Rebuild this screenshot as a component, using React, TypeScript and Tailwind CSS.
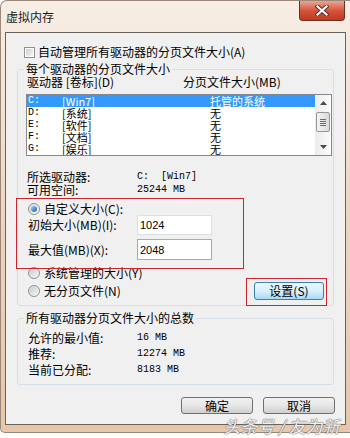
import React from "react";

const CJK = "font-['Noto_Sans_CJK_SC','Liberation_Sans',sans-serif]";
const MONO = "font-['Liberation_Mono','Noto_Sans_CJK_SC',monospace]";

const DRIVES = [
  { d: "C:", label: "[Win7]", size: "托管的系统", selected: true },
  { d: "D:", label: "[系统]", size: "无" },
  { d: "E:", label: "[软件]", size: "无" },
  { d: "F:", label: "[文档]", size: "无" },
  { d: "G:", label: "[娱乐]", size: "无" },
];

const TOTALS = [
  { k: "允许的最小值:", v: "16 MB" },
  { k: "推荐:", v: "12274 MB" },
  { k: "当前已分配:", v: "8183 MB" },
];

function Radio({ checked }: { checked?: boolean }) {
  return (
    <span className="flex h-[12px] w-[12px] shrink-0 items-center justify-center rounded-full border border-[#8e8f8f] bg-gradient-to-br from-[#d6d8dc] to-[#fbfbfb]">
      {checked ? (
        <span className="h-[6px] w-[6px] rounded-full bg-gradient-to-br from-[#9fd0f5] to-[#1a5ea9]" />
      ) : (
        <span className="h-[8px] w-[8px] rounded-full bg-gradient-to-br from-[#c9cccf] to-[#f4f4f4]" />
      )}
    </span>
  );
}

function Arrow({ up }: { up?: boolean }) {
  return (
    <svg width="7" height="4" viewBox="0 0 7 4">
      <path d={up ? "M0 4 L3.5 0 L7 4 Z" : "M0 0 L3.5 4 L7 0 Z"} fill="#4a4a4a" />
    </svg>
  );
}

function Button({ children, focused }: { children: React.ReactNode; focused?: boolean }) {
  return (
    <div
      className={
        focused
          ? "flex h-[18px] w-[70px] items-center justify-center rounded-[3px] border border-[#3c7fb1] bg-gradient-to-b from-[#eaf6fd] via-[#d9f0fc] to-[#a7d9f5]"
          : "flex h-[17px] w-[72px] items-center justify-center rounded-[3px] border border-[#707070] bg-gradient-to-b from-[#f2f2f2] via-[#e6e6e6] to-[#cfcfcf]"
      }
    >
      {children}
    </div>
  );
}

export default function App() {
  return (
    <div className={`relative h-[438px] w-[350px] overflow-hidden bg-white text-[12px] leading-[12px] text-black ${CJK}`}>
      <div className="h-[433px] rounded-tl-[7px] rounded-bl-[5px] border-y border-l border-[#9c8878] bg-gradient-to-b from-[#f7eee5] via-[#ecd6c1] to-[#e6c7a9]">
        {/* Title bar */}
        <div className="flex h-[31px] items-center">
          <span className="pl-[5px] text-[12px] text-[#1a1a1a]">虚拟内存</span>
          <div className="mr-[5px] ml-auto flex h-[20px] w-[46px] items-center justify-center self-start rounded-b-[4px] border border-t-0 border-[#6d2e23] bg-gradient-to-b from-[#e7a597] via-[#d4543d] to-[#c0391f]">
            <svg width="14" height="11" viewBox="0 0 14 11">
              <path d="M2.5 1.5 L11.5 9.5 M11.5 1.5 L2.5 9.5" stroke="#5a2a22" strokeWidth="4" strokeLinecap="square" />
              <path d="M2.5 1.5 L11.5 9.5 M11.5 1.5 L2.5 9.5" stroke="#ffffff" strokeWidth="2.2" strokeLinecap="square" />
            </svg>
          </div>
        </div>

        {/* Client area */}
        <div className="relative ml-[4px] flex h-[393px] w-[341px] flex-col border border-[#6d6259] bg-[#f0f0f0]">
          <div className="mt-[12px] flex h-[14px] items-center pl-[18px]">
            <span className="h-[11px] w-[11px] border border-[#8e8f8f] bg-white p-[1px]">
              <span className="block h-full w-full bg-gradient-to-br from-[#cdd0d4] to-[#f4f4f4]" />
            </span>
            <span className="ml-[3px]">自动管理所有驱动器的分页文件大小(A)</span>
          </div>

          {/* Per-drive group */}
          <fieldset className="mt-[4px] ml-[11px] w-[317px] rounded-[3px] border border-[#d5dfe5]">
            <legend className="ml-[6px] px-[2px] leading-[12px]">每个驱动器的分页文件大小</legend>
            <div className="flex flex-col pb-[5px] pl-[8px]">
              <div className="mt-[1px] flex h-[12px] items-center pl-[1px]">
                <span className="w-[156px]">驱动器 [卷标](D)</span>
                <span>分页文件大小(MB)</span>
              </div>

              <div className="mt-[6px] flex h-[62px] w-[306px] border border-[#828790] bg-white">
                <div className="flex flex-1 flex-col overflow-hidden">
                  {DRIVES.map((r) => (
                    <div
                      key={r.d}
                      className={`grid h-[12px] shrink-0 grid-cols-[35px_148px_1fr] items-center text-[11px] leading-[12px] ${r.selected ? "bg-[#3399ff] text-white" : ""}`}
                    >
                      <span className={`${MONO} pl-[1px] text-[10px]`}>{r.d}</span>
                      <span>{r.label}</span>
                      <span>{r.size}</span>
                    </div>
                  ))}
                </div>
                <div className="flex w-[16px] flex-col items-center bg-gradient-to-r from-[#ececec] to-[#fbfbfb]">
                  <div className="flex h-[16px] items-center justify-center">
                    <Arrow up />
                  </div>
                  <div className="mt-[1px] flex h-[20px] w-[14px] flex-col items-center justify-center gap-[1px] rounded-[2px] border border-[#979797] bg-gradient-to-r from-[#f4f4f4] to-[#d9d9d9]">
                    <span className="h-px w-[6px] bg-[#6b6b6b]" />
                    <span className="h-px w-[6px] bg-[#6b6b6b]" />
                    <span className="h-px w-[6px] bg-[#6b6b6b]" />
                    <span className="h-px w-[6px] bg-[#6b6b6b]" />
                  </div>
                  <div className="mt-auto flex h-[16px] items-center justify-center">
                    <Arrow />
                  </div>
                </div>
              </div>

              <div className="mt-[15px] flex h-[12px] items-center pl-[1px]">
                <span className="w-[110px]">所选驱动器:</span>
                <span className={`${MONO} whitespace-pre text-[10px]`}>C:  [Win7]</span>
              </div>
              <div className="mt-[1px] flex h-[12px] items-center pl-[1px]">
                <span className="w-[110px]">可用空间:</span>
                <span className={`${MONO} text-[10px]`}>25244 MB</span>
              </div>

              <div className="mt-[7px] flex h-[12px] items-center pl-[2px]">
                <Radio checked />
                <span className="ml-[4px]">自定义大小(C):</span>
              </div>
              <div className="flex h-[20px] items-center pl-[2px]">
                <span className="w-[109px]">初始大小(MB)(I):</span>
                <div className="flex h-[20px] w-[75px] items-center border border-[#dbdfe6] bg-white pl-[2px] font-['Liberation_Sans',sans-serif] text-[11px]">
                  1024
                </div>
              </div>
              <div className="mt-[4px] flex h-[21px] items-center pl-[2px]">
                <span className="w-[109px]">最大值(MB)(X):</span>
                <div className="flex h-[21px] w-[75px] items-center border border-[#7eb4ea] bg-white pl-[2px] font-['Liberation_Sans',sans-serif] text-[11px]">
                  2048
                </div>
              </div>

              <div className="mt-[7px] flex h-[12px] items-center pl-[2px]">
                <Radio />
                <span className="ml-[4px]">系统管理的大小(Y)</span>
              </div>
              <div className="mt-[3px] flex h-[18px] items-center pl-[2px] pr-[9px]">
                <Radio />
                <span className="ml-[4px]">无分页文件(N)</span>
                <div className="ml-auto">
                  <Button focused>设置(S)</Button>
                </div>
              </div>
            </div>
          </fieldset>

          {/* Totals group */}
          <fieldset className="mt-[6px] ml-[11px] w-[317px] rounded-[3px] border border-[#d5dfe5]">
            <legend className="ml-[6px] px-[2px] leading-[12px]">所有驱动器分页文件大小的总数</legend>
            <div className="mt-[6px] flex flex-col pb-[6px] pl-[10px]">
              {TOTALS.map((t) => (
                <div key={t.k} className="flex h-[16px] items-center">
                  <span className="w-[109px]">{t.k}</span>
                  <span className={`${MONO} text-[10px]`}>{t.v}</span>
                </div>
              ))}
            </div>
          </fieldset>

          <div className="mt-[12px] flex justify-end gap-[10px] pr-[10px]">
            <Button>确定</Button>
            <Button>取消</Button>
          </div>

          {/* red annotation boxes */}
          <div className="absolute top-[165px] left-[10px] h-[71px] w-[228px] border border-[#c8282d]" />
          <div className="absolute top-[245px] left-[240px] h-[28px] w-[81px] border border-[#c8282d]" />
        </div>
      </div>

      {/* watermark */}
      <div className="absolute top-[416px] left-[225px] -skew-x-12 text-[17px] leading-[20px] text-white/90 [text-shadow:0_0_1px_#777,0_0_1px_#777,0_0_1px_#777]">
        头条号 / 友为新
      </div>
    </div>
  );
}
